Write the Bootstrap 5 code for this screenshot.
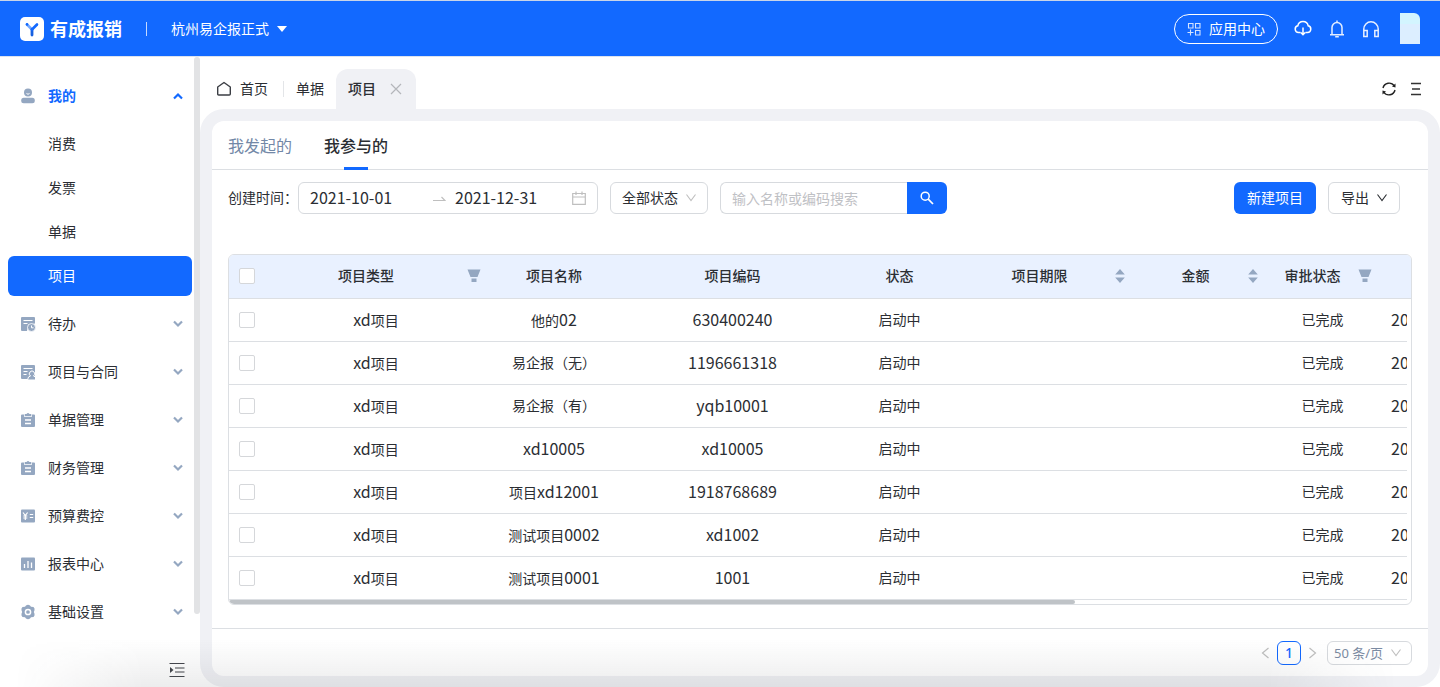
<!DOCTYPE html>
<html lang="zh-CN">
<head>
<meta charset="utf-8">
<meta name="viewport" content="width=device-width, initial-scale=1">
<title>有成报销 - 项目</title>
<link rel="stylesheet" href="https://cdn.jsdelivr.net/npm/bootstrap@5.3.0/dist/css/bootstrap.min.css">
<style>
  :root { --brand: #1269ff; --slate: #94a7c1; --line: #dcdfe3; --ink: #2b2e33; --canvas: #f0f1f5; }
  body { font: 14px/20px "Noto Sans", "Noto Sans CJK SC", sans-serif; color: var(--ink); background: #fff; }
  a { color: inherit; text-decoration: none; }
  svg { display: block; flex: none; }
  button { font: inherit; }
  .latin { font: 16px/20px "Noto Sans CJK SC", sans-serif; }
  /* top bar */
  .topbar { height: 57px; background: var(--brand); border-top: 1px solid #c9d5e8; border-bottom: 1px solid #dbe3ef; color: #fff; padding: 0 20px; }
  .brand-name { font-size: 18px; font-weight: 700; margin-left: 6px; }
  .brand-rule { width: 1px; height: 14px; background: #c4d9ff; }
  .org-switch, .icon-btn { background: none; border: 0; padding: 0; color: inherit; }
  .app-center { height: 30px; width: 104px; border: 1px solid #fff; border-radius: 15px; background: none; color: #fff; }
  .avatar { width: 20px; height: 31px; background: linear-gradient(#d3f5ff 35%, #dceeff 35%); border-top-right-radius: 6px; margin-left: 20px; }
  /* sidebar */
  .sidebar { width: 200px; flex: none; position: relative; padding: 15px 8px 8px; }
  .sidebar::after { content: ""; position: absolute; right: 0; top: 0; width: 6px; height: 557px; border-radius: 3px; background: #e2e3e5; }
  .menu-head { height: 48px; width: 184px; padding: 0 9px 0 12px; display: flex; align-items: center; background: none; border: 0; color: var(--ink); }
  .menu-head svg { color: var(--slate); }
  .menu-head span { margin-left: 12px; margin-right: auto; }
  .menu-head.opened { color: var(--brand); font-weight: 700; }
  .menu-head.opened .chev { color: var(--brand); }
  .menu-sub a { display: flex; align-items: center; height: 40px; margin: 4px 0; padding-left: 40px; width: 184px; border-radius: 6px; }
  .menu-sub a.current { background: var(--brand); color: #fff; }
  .collapse-btn { margin: 26px 7px 0 auto; color: #44474d; }
  /* page tabs */
  .page-tabs { height: 52px; padding: 12px 17px 0 16px; }
  .page-tabs .rule { width: 1px; height: 16px; background: #e3e5e8; margin: 0 12px 0 15px; }
  .page-tab-on { height: 40px; width: 80px; background: var(--canvas); border-radius: 12px 12px 0 0; margin-left: 12px; padding: 0 14px 0 12px; font-weight: 500; }
  .canvas { background: var(--canvas); border-radius: 24px; padding: 12px 12px 11px; }
  .panel { background: #fff; border-radius: 12px; }
  .view-tabs { height: 49px; border-bottom: 1px solid var(--line); padding: 0 16px; gap: 32px; font-size: 16px; line-height: 24px; color: #7288a7; }
  .view-tabs a { display: flex; align-items: center; height: 49px; position: relative; }
  .view-tabs a.current { color: var(--ink); font-weight: 500; }
  .view-tabs a.current::after { content: ""; position: absolute; bottom: 0; left: 20px; width: 24px; height: 3px; background: var(--brand); }
  /* filters */
  .filters { padding: 12px 28px 40px 16px; }
  .field { height: 32px; border: 1px solid #d7dade; border-radius: 6px; background: #fff; display: flex; align-items: center; }
  .date-range { width: 300px; padding: 0 11px; color: #bfbfbf; }
  .date-range input { border: 0; outline: 0; padding: 0 0 2px; width: 116px; font: 16px/20px "Noto Sans CJK SC", sans-serif; color: var(--ink); background: none; }
  .date-range .arrow { margin: 0 9px 0 7px; }
  .picker { position: relative; width: 98px; margin-left: 12px; color: #bfbfbf; }
  .picker select { appearance: none; border: 0; background: none; width: 100%; height: 30px; padding: 0 11px; color: var(--ink); font: inherit; }
  .picker svg { position: absolute; right: 11px; top: 10px; pointer-events: none; }
  .search { width: 227px; margin-left: 12px; }
  .search input { border: 1px solid #d7dade; border-right: 0; border-radius: 6px 0 0 6px; height: 32px; width: 187px; padding: 0 11px; outline: 0; }
  .search input::placeholder { color: #bfc1c5; }
  .search button { width: 40px; height: 32px; border: 0; border-radius: 0 6px 6px 0; background: var(--brand); color: #fff; padding: 0 13px; }
  .btn-new { height: 32px; width: 82px; border: 0; border-radius: 6px; background: var(--brand); color: #fff; padding: 0; }
  .btn-export { width: 72px; padding: 0 12px; margin-left: 12px; color: var(--ink); justify-content: space-between; }
  /* data table */
  .grid-wrap { margin: 0 16px; border: 1px solid var(--line); border-radius: 6px; overflow: hidden; position: relative; }
  .grid-wrap::after { content: ""; position: absolute; left: 0; bottom: 0; width: 846px; height: 4px; border-radius: 2px; background: #bfc3c7; }
  .grid-table { table-layout: fixed; width: 100%; margin-bottom: 4px; text-align: center; }
  .grid-table th { height: 43px; padding: 0; background: #e9f1ff; border-bottom: 1px solid var(--line); font-weight: 500; }
  .grid-table td { height: 43px; padding: 0; border-bottom: 1px solid var(--line); white-space: nowrap; }
  .grid-table td:last-child { border: 0; }
  .grid-table .clip { overflow: hidden; text-overflow: clip; text-align: left; padding-left: 13px; }
  .grid-table input { appearance: none; display: block; width: 16px; height: 16px; margin: 0 10px; border: 1px solid #d5d7da; border-radius: 2px; background: #fff; }
  .th-tool { display: flex; align-items: center; padding-right: 6px; color: var(--slate); }
  .th-tool span { flex: 1; color: var(--ink); }
  .th-sort { padding: 0 9px; }
  .c-check { width: 36px; } .c-type { width: 222px; } .c-name { width: 134px; } .c-code { width: 223px; }
  .c-state { width: 111px; } .c-term { width: 179px; } .c-money { width: 133px; } .c-gut { width: 4px; }
  /* pager */
  .pager { border-top: 1px solid var(--line); padding: 12px 16px 11px; color: #bfbfbf; }
  .pager .now { width: 24px; height: 24px; border: 1px solid var(--brand); border-radius: 6px; color: var(--brand); background: #fff; padding: 0; line-height: 22px; margin: 0 7px; font-weight: 500; }
  .pager .picker { width: 85px; height: 24px; margin-left: 10px; }
  .pager .picker select { height: 22px; padding: 0 6px; font-size: 13px; color: #7c8ca3; }
  .pager .picker svg { top: 6px; right: 10px; }
  .edge-shade { position: fixed; inset: auto 0 0 0; height: 48px; pointer-events: none; background: linear-gradient(transparent, rgba(40,45,50,.085)); -webkit-mask-image: linear-gradient(90deg, transparent 1%, #000 10%, #000 88%, transparent 97%); mask-image: linear-gradient(90deg, transparent 1%, #000 10%, #000 88%, transparent 97%); }
</style>
</head>
<body class="d-flex flex-column min-vh-100">

<svg width="0" height="0" class="position-absolute" aria-hidden="true">
  <symbol id="chev" viewBox="0 0 10 10"><path d="M1 2.500l4 4 4-4" fill="none" stroke="currentColor" stroke-width="2.200"/></symbol>
  <symbol id="thin" viewBox="0 0 10 10"><path d="M.5 1.500L5 7.500l4.500-6" fill="none" stroke="currentColor" stroke-width="1.100"/></symbol>
  <symbol id="funnel" viewBox="0 0 14 14"><path d="M.5 .5h13l-3 7.500h-7z M4.500 9.500h5V13h-5z" fill="currentColor"/></symbol>
  <symbol id="sorter" viewBox="0 0 10 16"><path d="M5 1l4.800 5.500H.2z M.2 9.500h9.600L5 15z" fill="currentColor"/></symbol>
  <symbol id="clip" viewBox="0 0 16 16"><path d="M2 2.500h2V4.700h8V2.500h2q1 0 1 1V14q0 1-1 1H2q-1 0-1-1V3.500q0-1 1-1zM4.700 2h1.800q1.500-2 3 0h1.800v2H4.700z" fill="currentColor"/><path d="M5 8h6M5 11.500h6" stroke="#fff" stroke-width="1.300"/></symbol>
</svg>

<header class="topbar d-flex align-items-center">
  <svg width="24" height="24" viewBox="0 0 24 24"><rect width="24" height="24" rx="5" fill="#fff"/><path d="M7 7.500l5 5" stroke="#74a8ff" stroke-width="2.600" stroke-linecap="round"/><path d="M12 12.500V18" stroke="#1760e0" stroke-width="2.800" stroke-linecap="round"/><path d="M12 12.500L17 7.500" stroke="#1269ff" stroke-width="2.600" stroke-linecap="round"/><circle cx="7" cy="7.400" r="1.300" fill="#1269ff"/></svg>
  <span class="brand-name">有成报销</span>
  <span class="brand-rule ms-4"></span>
  <button class="org-switch d-flex align-items-center ms-4" type="button">杭州易企报正式
    <svg class="ms-2" width="10" height="6" viewBox="0 0 10 6"><path d="M0 0h10L5 6z" fill="#fff"/></svg>
  </button>
  <button class="app-center d-flex align-items-center justify-content-center gap-2 p-0 ms-auto" type="button">
    <svg width="14" height="14" viewBox="0 0 14 14" fill="none" stroke="#d4e3ff" stroke-width="1.100"><path d="M1.500 1.500h4.500v4.500h-4.500zM8.500 1.500h4.500v4.500h-4.500zM8.500 8.500h4.500v4.500h-4.500zM3.500 7.500v6M.5 10.500h6"/></svg>应用中心
  </button>
  <button class="icon-btn ms-3" type="button" aria-label="下载"><svg width="18" height="18" viewBox="0 0 18 18" fill="none" stroke="#fff" stroke-width="1.500"><path d="M6.500 12.500H4.500a3.400 3.400 0 0 1-.7-6.700 5.300 5.300 0 0 1 10.400 0 3.400 3.400 0 0 1-.7 6.700H11.500M9 7.500v7M6.800 12.500L9 14.700l2.200-2.200"/></svg></button>
  <button class="icon-btn ms-3" type="button" aria-label="通知"><svg width="18" height="18" viewBox="0 0 18 18" fill="none" stroke="#e4eeff" stroke-width="1.500"><path d="M2 14.800h14M4 14.800V7.500a5 5 0 0 1 10 0V14.800M9 2.500V.5M7.200 16.800h3.600"/></svg></button>
  <button class="icon-btn ms-3" type="button" aria-label="客服"><svg width="18" height="18" viewBox="0 0 18 18" fill="none" stroke="#e8f0ff" stroke-width="1.500"><path d="M1.800 11V9a7.200 7.200 0 0 1 14.400 0v2M1.800 10.500h3.400v6H1.800zM12.800 10.500h3.400v6h-3.400z"/></svg></button>
  <span class="avatar"></span>
</header>

<div class="d-flex flex-grow-1">
  <nav class="sidebar d-flex flex-column">
    <button class="menu-head opened" type="button"><svg width="16" height="16" viewBox="0 0 16 16" fill="currentColor"><circle cx="8" cy="4.500" r="4"/><rect x="1.200" y="9.800" width="13.600" height="5.400" rx="2.500"/><path d="M6.500 5.500q1.500 1.500 3 0" stroke="#fff" fill="none"/></svg><span>我的</span><svg class="chev" width="10" height="10" viewBox="0 0 10 10"><path d="M1 7.500l4-4 4 4" fill="none" stroke="currentColor" stroke-width="2.200"/></svg></button>
    <div class="menu-sub">
      <a href="#">消费</a><a href="#">发票</a><a href="#">单据</a><a href="#" class="current">项目</a>
    </div>
    <button class="menu-head" type="button"><svg width="16" height="16" viewBox="0 0 16 16"><path d="M2 1h12q1 0 1 1v5.500L8 9l-1 6H2q-1 0-1-1V2q0-1 1-1z" fill="currentColor"/><path d="M3.500 4.500h9M3.500 7.500h4" stroke="#fff" stroke-width="1.200"/><circle cx="11.500" cy="11.500" r="4" fill="currentColor" stroke="#fff" stroke-width=".8"/><path d="M11.500 9.500v2.300h2" stroke="#fff" fill="none"/></svg><span>待办</span><svg class="chev" width="10" height="10"><use href="#chev"/></svg></button>
    <button class="menu-head" type="button"><svg width="16" height="16" viewBox="0 0 16 16"><path d="M2 1h12q1 0 1 1v13H2q-1 0-1-1V2q0-1 1-1z" fill="currentColor"/><path d="M3.500 4.500h9M3.500 7.500h4M3.500 10.500h3" stroke="#fff" stroke-width="1.200"/><path d="M7.500 16l1-3 2-1a2.700 2.700 0 1 1 3 0l2 1v3z" fill="currentColor" stroke="#fff"/></svg><span>项目与合同</span><svg class="chev" width="10" height="10"><use href="#chev"/></svg></button>
    <button class="menu-head" type="button"><svg width="16" height="16"><use href="#clip"/></svg><span>单据管理</span><svg class="chev" width="10" height="10"><use href="#chev"/></svg></button>
    <button class="menu-head" type="button"><svg width="16" height="16"><use href="#clip"/></svg><span>财务管理</span><svg class="chev" width="10" height="10"><use href="#chev"/></svg></button>
    <button class="menu-head" type="button"><svg width="16" height="16" viewBox="0 0 16 16"><rect x="1" y="1.500" width="14" height="13" rx="1" fill="currentColor"/><path d="M3 4.500l2.300 3 2.300-3M5.300 7.500V12M3.300 8h4M3.300 10h4M9.800 6.500h3.400M9.800 9.500h3.400" fill="none" stroke="#fff" stroke-width="1.200"/></svg><span>预算费控</span><svg class="chev" width="10" height="10"><use href="#chev"/></svg></button>
    <button class="menu-head" type="button"><svg width="16" height="16" viewBox="0 0 16 16"><rect x="1" y="1.500" width="14" height="13" rx="1" fill="currentColor"/><path d="M4.500 8v4M8 5v7M11.500 6.500V12" stroke="#fff" stroke-width="1.300"/></svg><span>报表中心</span><svg class="chev" width="10" height="10"><use href="#chev"/></svg></button>
    <button class="menu-head" type="button"><svg width="16" height="16" viewBox="0 0 16 16"><path d="M6 1.500Q8 0 10 1.500l1 1.300 2.500.2q1.500 1.500 1 3.200L13.800 8l.7 1.800q.5 1.700-1 3.200l-2.500.2-1 1.300q-2 1.500-4 0l-1-1.300-2.500-.2q-1.500-1.500-1-3.200L2.200 8l-.7-1.800q-.5-1.700 1-3.200l2.500-.2z" fill="currentColor"/><circle cx="8" cy="8" r="2.600" fill="none" stroke="#fff" stroke-width="1.500"/></svg><span>基础设置</span><svg class="chev" width="10" height="10"><use href="#chev"/></svg></button>
    <button class="icon-btn collapse-btn" type="button" aria-label="收起菜单"><svg width="16" height="16" viewBox="0 0 16 16"><path d="M.5 1.500h15M6 6h9.500M6 10h9.500M.5 14.500h15" stroke="currentColor" stroke-width="1.200"/><path d="M1 5l3.500 3L1 11z" fill="currentColor"/></svg></button>
  </nav>

  <main class="flex-grow-1 d-flex flex-column" style="min-width:0">
    <div class="page-tabs d-flex align-items-center">
      <a href="#" class="d-flex align-items-center gap-2"><svg width="16" height="16" viewBox="0 0 16 16"><path d="M1.700 6L8 1.500 14.300 6v7q0 1-1 1H2.700q-1 0-1-1z" fill="none" stroke="#3b3e44" stroke-width="1.400" stroke-linejoin="round"/></svg>首页</a>
      <span class="rule"></span>
      <a href="#">单据</a>
      <div class="page-tab-on d-flex align-items-center justify-content-between"><a href="#">项目</a><button class="icon-btn" type="button" aria-label="关闭"><svg width="12" height="12" viewBox="0 0 12 12"><path d="M1 1l10 10M11 1L1 11" stroke="#b4b6ba" stroke-width="1.200"/></svg></button></div>
      <button class="icon-btn ms-auto" type="button" aria-label="刷新"><svg width="16" height="16" viewBox="0 0 16 16" fill="none" stroke="#222" stroke-width="1.400"><path d="M2 7a6.200 6.200 0 0 1 11.300-2M14 9A6.200 6.200 0 0 1 2.700 11"/><path d="M14.500 2.500v4l-3.500-1zM1.500 13.500v-4l3.500 1z" fill="#222" stroke="none"/></svg></button>
      <button class="icon-btn" type="button" aria-label="更多"><svg class="ms-2" style="margin-left:12px" width="18" height="14" viewBox="-4 0 18 14"><path d="M2 1.500h10M3 7h8M2 12.500h10" stroke="#333" stroke-width="1.300"/></svg></button>
    </div>

    <div class="canvas flex-grow-1 d-flex flex-column">
      <section class="panel flex-grow-1 d-flex flex-column">
        <div class="view-tabs d-flex"><a href="#">我发起的</a><a href="#" class="current">我参与的</a></div>

        <form class="filters d-flex align-items-center">
          <label for="from">创建时间：</label>
          <div class="field date-range">
            <input id="from" type="text" value="2021-10-01">
            <svg class="arrow" width="13" height="8" viewBox="0 0 13 8"><path d="M0 6.500h12L8.500 3" fill="none" stroke="currentColor" stroke-width="1.200"/></svg>
            <input type="text" value="2021-12-31" aria-label="结束日期">
            <svg class="ms-auto" width="14" height="14" viewBox="0 0 14 14"><path d="M.7 2.500h12.600v10.800H.7zM.7 6h12.600M4 .5V4M10 .5V4" fill="none" stroke="currentColor" stroke-width="1.200"/></svg>
          </div>
          <div class="field picker"><select aria-label="状态"><option>全部状态</option></select><svg width="10" height="10"><use href="#thin"/></svg></div>
          <div class="search d-flex"><input type="text" placeholder="输入名称或编码搜索" aria-label="搜索"><button type="submit" aria-label="搜索"><svg width="14" height="14" viewBox="0 0 14 14"><circle cx="5.200" cy="5.200" r="4" fill="none" stroke="#fff" stroke-width="1.500"/><path d="M8.200 8.200L13 13" stroke="#fff" stroke-width="1.700"/></svg></button></div>
          <button class="btn-new ms-auto" type="button">新建项目</button>
          <button class="field btn-export" type="button">导出<svg width="10" height="10"><use href="#thin"/></svg></button>
        </form>

        <div class="grid-wrap">
          <table class="grid-table">
            <colgroup><col class="c-check"><col class="c-type"><col class="c-name"><col class="c-code"><col class="c-state"><col class="c-term"><col class="c-money"><col class="c-state"><col><col class="c-gut"></colgroup>
            <thead><tr>
              <th><input type="checkbox" aria-label="全选"></th>
              <th><div class="th-tool"><span>项目类型</span><svg width="14" height="14"><use href="#funnel"/></svg></div></th>
              <th>项目名称</th><th>项目编码</th><th>状态</th>
              <th><div class="th-tool th-sort"><span>项目期限</span><svg width="10" height="16"><use href="#sorter"/></svg></div></th>
              <th><div class="th-tool th-sort"><span>金额</span><svg width="10" height="16"><use href="#sorter"/></svg></div></th>
              <th><div class="th-tool"><span>审批状态</span><svg width="14" height="14"><use href="#funnel"/></svg></div></th>
              <th></th><th></th>
            </tr></thead>
            <tbody>
              <tr><td><input type="checkbox" aria-label="选择"></td><td><span class="latin">xd</span>项目</td><td>他的<span class="latin">02</span></td><td><span class="latin">630400240</span></td><td>启动中</td><td></td><td></td><td>已完成</td><td class="clip"><span class="latin">20</span></td><td></td></tr>
              <tr><td><input type="checkbox" aria-label="选择"></td><td><span class="latin">xd</span>项目</td><td>易企报（无）</td><td><span class="latin">1196661318</span></td><td>启动中</td><td></td><td></td><td>已完成</td><td class="clip"><span class="latin">20</span></td><td></td></tr>
              <tr><td><input type="checkbox" aria-label="选择"></td><td><span class="latin">xd</span>项目</td><td>易企报（有）</td><td><span class="latin">yqb10001</span></td><td>启动中</td><td></td><td></td><td>已完成</td><td class="clip"><span class="latin">20</span></td><td></td></tr>
              <tr><td><input type="checkbox" aria-label="选择"></td><td><span class="latin">xd</span>项目</td><td><span class="latin">xd10005</span></td><td><span class="latin">xd10005</span></td><td>启动中</td><td></td><td></td><td>已完成</td><td class="clip"><span class="latin">20</span></td><td></td></tr>
              <tr><td><input type="checkbox" aria-label="选择"></td><td><span class="latin">xd</span>项目</td><td>项目<span class="latin">xd12001</span></td><td><span class="latin">1918768689</span></td><td>启动中</td><td></td><td></td><td>已完成</td><td class="clip"><span class="latin">20</span></td><td></td></tr>
              <tr><td><input type="checkbox" aria-label="选择"></td><td><span class="latin">xd</span>项目</td><td>测试项目<span class="latin">0002</span></td><td><span class="latin">xd1002</span></td><td>启动中</td><td></td><td></td><td>已完成</td><td class="clip"><span class="latin">20</span></td><td></td></tr>
              <tr><td><input type="checkbox" aria-label="选择"></td><td><span class="latin">xd</span>项目</td><td>测试项目<span class="latin">0001</span></td><td><span class="latin">1001</span></td><td>启动中</td><td></td><td></td><td>已完成</td><td class="clip"><span class="latin">20</span></td><td></td></tr>
            </tbody>
          </table>
        </div>

        <div class="pager d-flex align-items-center justify-content-end mt-auto">
          <button class="icon-btn" type="button" aria-label="上一页"><svg width="9" height="12" viewBox="0 0 9 12"><path d="M7.500 1L1.500 6l6 5" fill="none" stroke="currentColor" stroke-width="1.200"/></svg></button>
          <button class="now" type="button">1</button>
          <button class="icon-btn" type="button" aria-label="下一页"><svg width="9" height="12" viewBox="0 0 9 12"><path d="M1.500 1l6 5-6 5" fill="none" stroke="currentColor" stroke-width="1.200"/></svg></button>
          <div class="field picker"><select aria-label="每页条数"><option>50 条/页</option></select><svg width="10" height="10"><use href="#thin"/></svg></div>
        </div>
      </section>
    </div>
  </main>
</div>
<div class="edge-shade"></div>
<script src="https://cdn.jsdelivr.net/npm/bootstrap@5.3.0/dist/js/bootstrap.bundle.min.js"></script>
</body>
</html>
